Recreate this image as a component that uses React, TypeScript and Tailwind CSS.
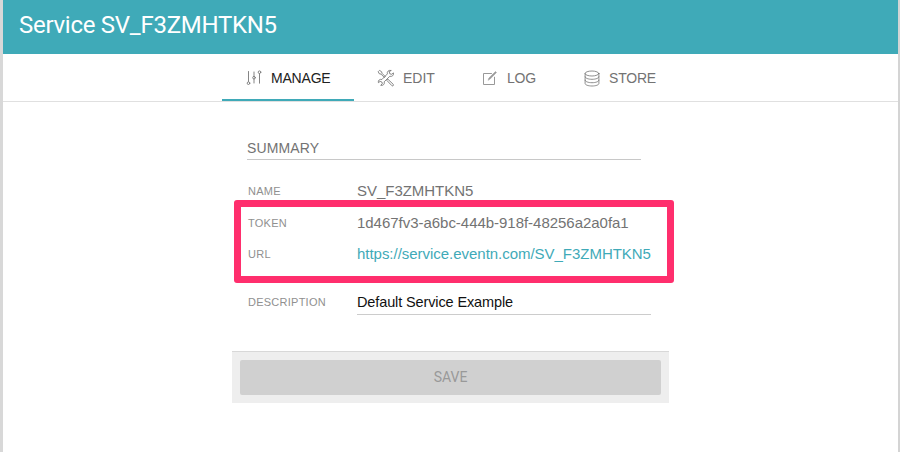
import type { ReactNode } from "react";

const iconProps = {
  fill: "none",
  stroke: "currentColor",
  strokeLinecap: "round" as const,
  strokeLinejoin: "round" as const,
};

function SlidersIcon() {
  return (
    <svg className="h-4 w-4" viewBox="0 0 16 16" strokeWidth="0.9" {...iconProps}>
      <path d="M2.5 1.5v10M8 2v4.4M8 9v4M13.5 3.8v9.4" />
      <circle cx="2.5" cy="13.2" r="1.3" />
      <circle cx="8" cy="7.7" r="1.3" />
      <circle cx="13.5" cy="2.2" r="1.3" />
    </svg>
  );
}

function ToolsIcon() {
  return (
    <svg className="h-[18px] w-[18px]" viewBox="0 0 18 18" strokeWidth="0.85" {...iconProps}>
      <path d="M1.5 2.4l1-1 2.2 1.4.2 1.4 3.4 3.4-.9.9-3.4-3.4-1.4-.3z" />
      <path d="M11 10.3l5.3 5.1c.7.9-.5 2-1.4 1.3l-5-5.2z" />
      <path d="M13.9 1.4c-2.4-.6-4.2 1.3-3.5 3.5L4.9 10.5c-2.1-.7-4.1.9-3.5 3.2l1.7-1.3 1.8.6.4 1.8-1.6 1.5c2.3.6 4.3-1.2 3.5-3.5l5.6-5.5c2.3.7 4.3-1.2 3.6-3.4l-1.7 1.4-1.9-.5-.5-1.9z" />
    </svg>
  );
}

function ComposeIcon() {
  return (
    <svg className="h-4 w-4 text-[#999999]" viewBox="0 0 16 16" strokeWidth="1" {...iconProps}>
      <path d="M9.5 3.5h-8v11h11V7.2" />
      <path d="M6.2 10l.7-2L13.5 1.5l1 1-6.4 6.6z" fill="currentColor" strokeWidth="0.5" />
    </svg>
  );
}

function DatabaseIcon() {
  return (
    <svg className="h-[17px] w-4" viewBox="0 0 16 17" strokeWidth="0.8" {...iconProps}>
      <ellipse cx="8" cy="3.5" rx="6.9" ry="2.5" />
      <path d="M1.1 3.5v10c0 1.4 3.1 2.5 6.9 2.5s6.9-1.1 6.9-2.5v-10" />
      <path d="M1.1 6.8c0 1.4 3.1 2.5 6.9 2.5s6.9-1.1 6.9-2.5M1.1 10.2c0 1.4 3.1 2.5 6.9 2.5s6.9-1.1 6.9-2.5" />
    </svg>
  );
}

function Tab({ icon, label, className }: { icon: ReactNode; label: string; className: string }) {
  return (
    <button className={`flex h-[47px] items-center whitespace-nowrap border-b-2 pt-[3px] font-['Liberation_Sans',sans-serif] text-[14px] ${className}`}>
      {icon}
      {label}
    </button>
  );
}

function Row({ label, className, children }: { label: string; className: string; children: ReactNode }) {
  return (
    <div className={`flex items-center ${className}`}>
      <dt className="w-[109px] text-[11px] tracking-[0.25px] text-[#909090]">{label}</dt>
      <dd className="flex-1 whitespace-nowrap tracking-[-0.03px]">{children}</dd>
    </div>
  );
}

export default function App() {
  return (
    <div className="h-[452px] overflow-hidden border-l-[3px] border-r-2 border-l-[#d8d8d8] border-r-[#d4d4d4] bg-white font-['Liberation_Sans',sans-serif] text-[15px] text-[#737373]">
      <header className="flex h-[54px] items-center bg-[#3faab8] pb-[5px] pl-4 font-[Roboto,sans-serif] text-[24px] tracking-[-0.27px] text-white">
        <h1>Service SV_F3ZMHTKN5</h1>
      </header>
      <nav className="flex h-12 border-b border-[#e0e0e0] pl-[219px]">
        <Tab icon={<SlidersIcon />} label="MANAGE" className="w-[132px] gap-[9px] border-[#3faab8] pl-6 tracking-[-0.2px] text-[#212121] [&>svg]:text-[#777777]" />
        <Tab icon={<ToolsIcon />} label="EDIT" className="w-[104px] gap-2 border-transparent pl-[23px]" />
        <Tab icon={<ComposeIcon />} label="LOG" className="w-[102px] gap-[9px] border-transparent pl-6 tracking-[-0.2px]" />
        <Tab icon={<DatabaseIcon />} label="STORE" className="w-[120px] gap-[9px] border-transparent pl-6 tracking-[-0.2px]" />
      </nav>
      <main className="relative ml-[229px] w-[437px]">
        <section className="pl-[15px] pt-[34px]">
          <h2 className="h-6 w-[394px] border-b border-[#c8c8c8] text-[14px] leading-6 tracking-[0.15px]">SUMMARY</h2>
          <dl className="pl-px pt-[15px]">
            <Row label="NAME" className="h-8">SV_F3ZMHTKN5</Row>
            <Row label="TOKEN" className="h-8">1d467fv3-a6bc-444b-918f-48256a2a0fa1</Row>
            <Row label="URL" className="h-[31px]">
              <a className="text-[#3faab8]">https://service.eventn.com/SV_F3ZMHTKN5</a>
            </Row>
            <Row label="DESCRIPTION" className="mt-5 h-[25px]">
              <div className="h-[25px] w-[294px] border-b border-[#cccccc] text-[14.5px] leading-[25px] tracking-[-0.12px] text-[#111111]">Default Service Example</div>
            </Row>
          </dl>
        </section>
        <footer className="mt-9 h-[52px] border-t border-[#d8d8d8] bg-[#eeeeee] px-2 pt-2">
          <button className="h-[35px] w-[421px] rounded-[2px] bg-[#d0d0d0] font-[Roboto,sans-serif] text-[14px] text-[#999999]">SAVE</button>
        </footer>
        <div className="absolute left-[2px] top-[98px] h-[83px] w-[440px] rounded-[3px] border-[7px] border-[#ff2e6d]" />
      </main>
    </div>
  );
}
